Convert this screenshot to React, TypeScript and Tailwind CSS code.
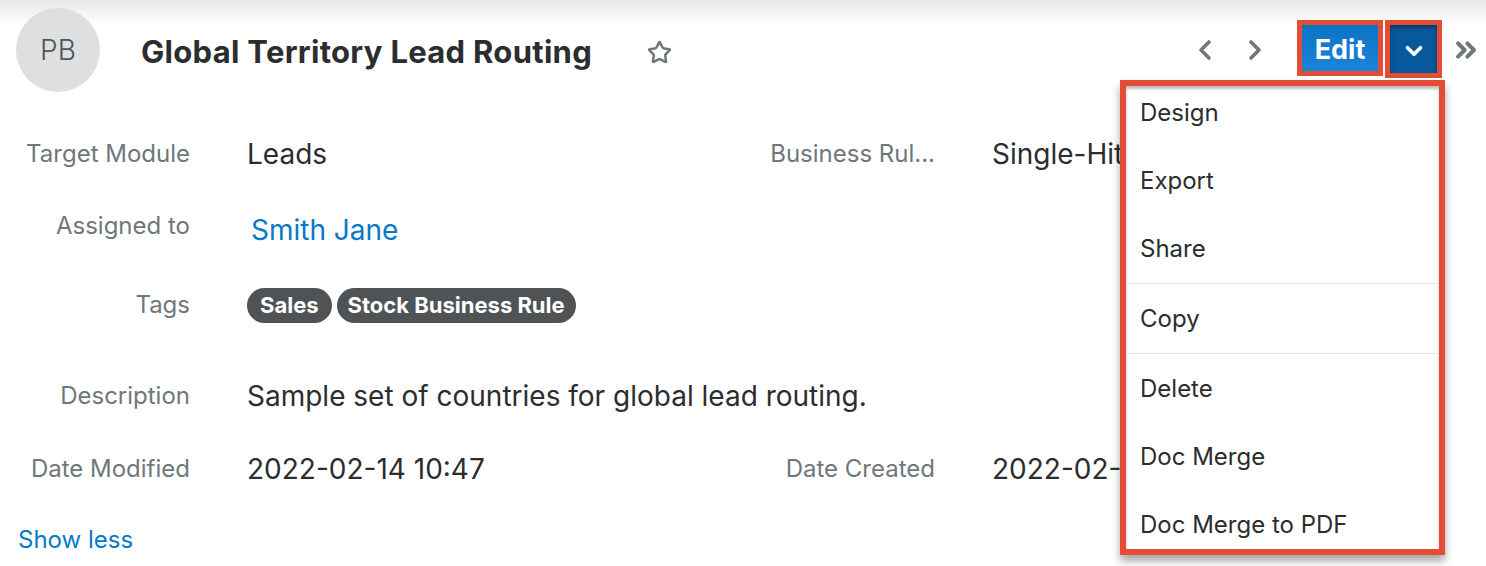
import { Star, ChevronDown, ChevronsRight } from 'lucide-react';

const MENU: (string | null)[] = ['Design', 'Export', 'Share', null, 'Copy', null, 'Delete', 'Doc Merge', 'Doc Merge to PDF'];

function Label({ children, className = '' }: { children: React.ReactNode; className?: string }) {
  return <div className={`whitespace-nowrap text-right text-[24px] text-[#6f777b] ${className}`}>{children}</div>;
}

function Value({ children, className = '' }: { children: React.ReactNode; className?: string }) {
  return <div className={`whitespace-nowrap text-[28px] text-[#2b2d2e] ${className}`}>{children}</div>;
}

function Chevron({ dir }: { dir: 'left' | 'right' }) {
  return (
    <svg width="16" height="22" viewBox="0 0 16 22" className="text-[#6f777b]">
      <polyline
        points={dir === 'left' ? '13,3 5,11 13,19' : '3,3 11,11 3,19'}
        fill="none"
        stroke="currentColor"
        strokeWidth="3.6"
        strokeLinecap="round"
        strokeLinejoin="round"
      />
    </svg>
  );
}

export default function App() {
  return (
    <div className="relative h-[566px] w-[1486px] overflow-hidden bg-[linear-gradient(to_bottom,#e6e6e6,#ffffff_24px)] font-['Inter',sans-serif]">
      {/* header */}
      <div className="flex h-[100px] items-center pl-4 pr-[4px]">
        <div className="flex h-[84px] w-[84px] items-center justify-center rounded-full bg-[#dddfe1] text-[28px] font-light text-[#505457]">
          PB
        </div>
        <h1 className="ml-[41px] mt-1 text-[31px] font-bold tracking-[0.3px] text-[#2b2d2e]">Global Territory Lead Routing</h1>
        <Star className="ml-[55px] mt-1 text-[#6f777b]" size={25} strokeWidth={2.4} />

        <div className="ml-auto flex items-center">
          <Chevron dir="left" />
          <div className="ml-[36px]">
            <Chevron dir="right" />
          </div>
          <div className="ml-[33px] mt-[-4px] border-[5px] border-[#e44d35]">
            <button className="flex h-[46px] w-[76px] items-center justify-center bg-[linear-gradient(to_bottom,#0b73c6,#1a84d8)] pt-[4px] text-[27px] font-bold text-white">
              Edit
            </button>
          </div>
          <div className="ml-[2px] mt-[-2px] border-[5px] border-[#e44d35]">
            <button className="flex h-[48px] w-[47px] items-center justify-center bg-[#07599c] pt-[3px] shadow-[inset_0_3px_4px_rgba(0,0,0,0.35)]">
              <ChevronDown className="text-white" size={26} strokeWidth={3.4} />
            </button>
          </div>
          <ChevronsRight className="ml-[8px] text-[#6f777b]" size={32} strokeWidth={3} />
        </div>
      </div>

      {/* fields */}
      <div className="grid grid-cols-[190px_440px_191px_1fr] gap-x-[57px] pt-[18px]">
        <div className="col-span-4 grid h-[72px] grid-cols-subgrid items-center">
          <Label>Target Module</Label>
          <Value>Leads</Value>
          <Label>Business Rul...</Label>
          <Value className="w-[128px] overflow-hidden">Single-Hit</Value>
        </div>
        <div className="col-span-4 grid h-[76px] grid-cols-subgrid items-center">
          <Label className="mb-[4px]">Assigned to</Label>
          <Value className="mt-[4px] pl-1 text-[#0679c8]">Smith Jane</Value>
        </div>
        <div className="col-span-4 grid h-[78px] grid-cols-subgrid items-center">
          <Label>Tags</Label>
          <div className="flex gap-[5px]">
            <span className="flex h-[35px] items-center rounded-full bg-[#4f5356] px-[13px] text-[22px] font-bold text-white">Sales</span>
            <span className="flex h-[35px] items-center rounded-full bg-[#4f5356] px-[11px] text-[22px] font-bold text-white">Stock Business Rule</span>
          </div>
        </div>
        <div className="col-span-4 grid h-[104px] grid-cols-subgrid items-center">
          <Label>Description</Label>
          <Value className="col-span-3">Sample set of countries for global lead routing.</Value>
        </div>
        <div className="col-span-4 grid h-[40px] grid-cols-subgrid items-center">
          <Label>Date Modified</Label>
          <Value>2022-02-14 10:47</Value>
          <Label>Date Created</Label>
          <Value className="w-[128px] overflow-hidden">2022-02-14 10:47</Value>
        </div>
      </div>
      <div className="mt-[37px] pl-[18px] text-[24px] leading-[30px] text-[#0679c8]">Show less</div>

      {/* actions dropdown */}
      <div className="absolute left-[1120px] top-[80px] h-[475px] w-[325px] border-[6px] border-[#e44d35] bg-white shadow-[0_6px_8px_rgba(0,0,0,0.35)]">
        <div className="h-full overflow-hidden shadow-[inset_0_3px_3px_rgba(0,0,0,0.25)]">
          <div className="-mt-[7px]">
            {MENU.map((item, i) =>
              item === null ? (
                <div key={i} className="h-[2px] border-t border-[#e3e6e8]" />
              ) : (
                <div key={i} className="flex h-[68px] items-center pl-[14px] text-[24px] text-[#2b2d2e]">
                  {item}
                </div>
              ),
            )}
          </div>
        </div>
      </div>
    </div>
  );
}
